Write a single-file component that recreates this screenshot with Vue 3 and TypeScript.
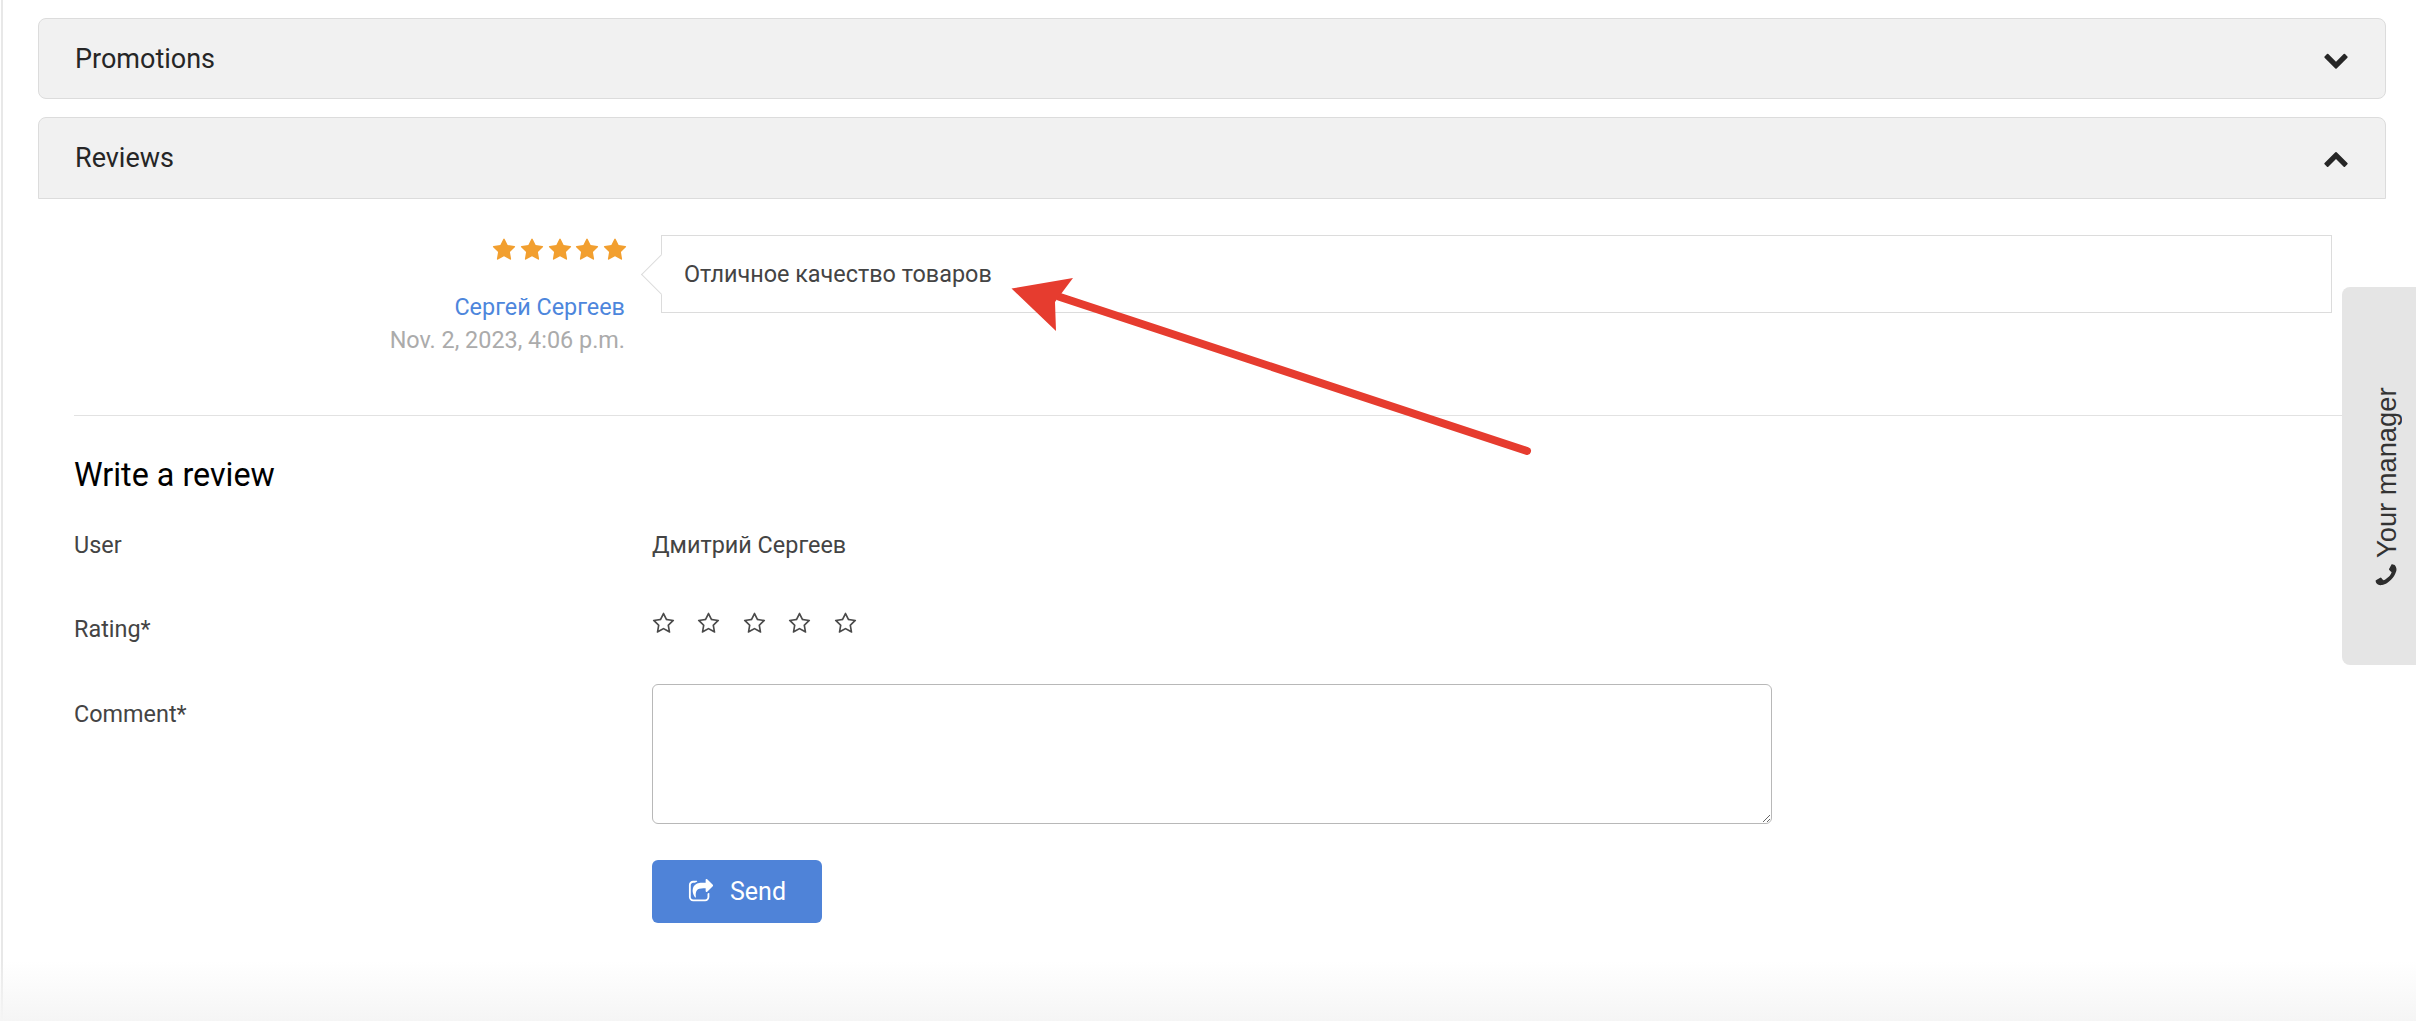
<script setup lang="ts">
const star = 'M1728 647q0 22-26 48l-363 354 86 500q1 7 1 20 0 21-10.500 35.500t-30.500 14.500q-19 0-40-12l-449-236-449 236q-22 12-40 12-21 0-31.500-14.500t-10.500-35.500q0-6 2-20l86-500-364-354q-25-27-25-48 0-37 56-46l502-73 225-455q19-41 49-41t49 41l225 455 502 73q56 9 56 46z'
const starO = 'M1201 1004l306-297-422-62-189-382-189 382-422 62 306 297-73 421 378-199 377 199zm527-357q0 22-26 48l-363 354 86 500q1 7 1 20 0 50-41 50-19 0-40-12l-449-236-449 236q-22 12-40 12-21 0-31.500-14.500t-10.500-35.500q0-6 2-20l86-500-364-354q-25-27-25-48 0-37 56-46l502-73 225-455q19-41 49-41t49 41l225 455 502 73q56 9 56 46z'
const stars = [1, 2, 3, 4, 5]
</script>

<template>
  <div class="page">
    <section class="panel closed">
      <span>Promotions</span>
      <svg class="chev" viewBox="0 0 1792 1792"><path d="M1683 808l-742 741q-19 19-45 19t-45-19l-742-741q-19-19-19-45.5t19-45.5l166-165q19-19 45-19t45 19l531 531 531-531q19-19 45-19t45 19l166 165q19 19 19 45.5t-19 45.5z" /></svg>
    </section>
    <section class="panel open">
      <span>Reviews</span>
      <svg class="chev" viewBox="0 0 1792 1792"><path d="M1683 1331l-166 165q-19 19-45 19t-45-19l-531-531-531 531q-19 19-45 19t-45-19l-166-165q-19-19-19-45.5t19-45.5l742-741q19-19 45-19t45 19l742 741q19 19 19 45.5t-19 45.5z" /></svg>
    </section>

    <div class="body">
      <div class="review">
        <div class="meta">
          <div class="gold">
            <svg v-for="s in stars" :key="s" viewBox="0 0 1792 1792"><path :d="star" /></svg>
          </div>
          <a class="author">Сергей Сергеев</a>
          <div class="date">Nov. 2, 2023, 4:06 p.m.</div>
        </div>
        <div class="bubble">Отличное качество товаров</div>
      </div>

      <hr class="rule" />

      <h3>Write a review</h3>
      <div class="row user">
        <label>User</label>
        <div>Дмитрий Сергеев</div>
      </div>
      <div class="row rating">
        <label>Rating*</label>
        <div class="empty">
          <svg v-for="s in stars" :key="s" viewBox="0 0 1792 1792"><path :d="starO" /></svg>
        </div>
      </div>
      <div class="row comment">
        <label>Comment*</label>
        <textarea></textarea>
      </div>
      <div class="row send">
        <span></span>
        <button type="button">
          <svg viewBox="0 0 1792 1792"><path d="M1472 989v259q0 119-84.500 203.500t-203.500 84.500h-832q-119 0-203.500-84.500t-84.500-203.500v-832q0-119 84.500-203.500t203.500-84.500h255q13 0 22.500 9.500t9.500 22.500q0 27-26 32-77 26-133 60-10 4-16 4h-112q-66 0-113 47t-47 113v832q0 66 47 113t113 47h832q66 0 113-47t47-113v-214q0-19 18-29 28-13 54-37 16-16 35-8 21 9 21 29zm237-496l-384 384q-18 19-45 19-12 0-25-5-39-17-39-59v-192h-160q-323 0-438 131-119 137-74 473 3 23-20 34-8 2-12 2-16 0-26-13-10-14-21-31t-39.500-68.500-49.500-99.500-38.500-114-17.500-122q0-49 3.500-91t14-90 28-88 47-81.500 68.500-74 94.500-61.500 124.500-48.500 159.500-30.500 196.500-11h160v-192q0-42 39-59 13-5 25-5 26 0 45 19l384 384q19 19 19 45t-19 45z" /></svg>
          Send
        </button>
      </div>
    </div>

    <aside class="manager">
      <span class="manager-label">
        <svg viewBox="0 0 1792 1792"><path d="M1600 1240q0 27-10 70.500t-21 68.500q-21 50-122 106-94 51-186 51-27 0-53-3.500t-57.500-12.500-47-14.500-55.500-20.500-49-18q-98-35-175-83-127-79-264-216t-216-264q-48-77-83-175-3-9-18-49t-20.500-55.500-14.500-47-12.500-57.500-3.500-53q0-92 51-186 56-101 106-122 25-11 68.500-21t70.500-10q14 0 21 3 18 6 53 76 11 19 30 54t35 63.500 31 53.500q3 4 17.500 25t21.500 35.500 7 28.500q0 20-28.500 50t-62 55-62 53-28.500 46q0 9 5 22.500t8.500 20.500 14 24 11.500 19q76 137 174 235t235 174q2 1 19 11.500t24 14 20.500 8.500 22.500 5q18 0 46-28.500t53-62 55-62 50-28.500q14 0 28.500 7t35.500 21.500 25 17.500q25 15 53.500 31t63.500 35 54 30q70 35 76 53 3 7 3 21z" /></svg>
        Your manager
      </span>
    </aside>

    <svg class="arrow" width="2416" height="1021" viewBox="0 0 2416 1021">
      <line x1="1527" y1="451" x2="1060" y2="297" stroke="#e63c2f" stroke-width="8" stroke-linecap="round" />
      <path d="M1011.500 288.500 L1073 278 L1055 302 L1056 331 Z" fill="#e63c2f" />
    </svg>
    <div class="fade"></div>
  </div>
</template>

<style scoped>
.page {
  position: relative;
  width: 2416px;
  height: 1021px;
  overflow: hidden;
  box-sizing: border-box;
  padding: 18px 30px 0 38px;
  background: #fff;
  font-family: Roboto, "Noto Sans", sans-serif;
  color: #444;
  font-size: 23.4px;
}
.page::before {
  content: "";
  position: absolute;
  left: 1px;
  top: 0;
  bottom: 0;
  width: 2px;
  background: #e8e8e8;
}
.panel {
  box-sizing: border-box;
  width: 2348px;
  display: flex;
  align-items: center;
  justify-content: space-between;
  padding: 0 36px 0 36px;
  background: #f1f1f1;
  border: 1px solid #dcdcdc;
  font-size: 27px;
  color: #262626;
}
.panel.closed {
  height: 81px;
  border-radius: 8px;
  margin-bottom: 18px;
}
.panel.open {
  height: 82px;
  border-radius: 8px 8px 0 0;
}
.chev {
  width: 26px;
  height: 26px;
  fill: #262626;
}
.body {
  padding: 0 0 0 36px;
}
.review {
  display: flex;
  padding-top: 36px;
}
.meta {
  width: 551px;
  text-align: right;
}
.gold {
  display: flex;
  justify-content: flex-end;
  gap: 3.7px;
  height: 24px;
  margin: 3px -2px 0 0;
}
.gold svg {
  width: 24px;
  height: 24px;
  fill: #f29f2f;
}
.author {
  display: block;
  margin-top: 30px;
  color: #4d86dc;
  line-height: 30px;
}
.date {
  color: #ababab;
  line-height: 30px;
  margin-top: 3px;
}
.bubble {
  position: relative;
  box-sizing: border-box;
  margin-left: 36px;
  width: 1671px;
  height: 78px;
  padding: 0 22px 1px;
  display: flex;
  align-items: center;
  border: 1px solid #dcdcdc;
  background: #fff;
}
.bubble::before {
  content: "";
  position: absolute;
  box-sizing: border-box;
  left: -15px;
  top: 24px;
  width: 29px;
  height: 29px;
  background: #fff;
  border-left: 1px solid #dcdcdc;
  border-bottom: 1px solid #dcdcdc;
  transform: rotate(45deg);
}
.rule {
  border: 0;
  border-top: 1px solid #e2e2e2;
  margin: 60px 0 0 0;
  width: 2300px;
}
h3 {
  margin: 41px 0 0;
  font-size: 32.300px;
  font-weight: 400;
  line-height: 36px;
  color: #000;
}
.row {
  display: grid;
  grid-template-columns: 578px 1fr;
  line-height: 30px;
}
.user {
  margin-top: 37px;
}
.rating {
  margin-top: 54px;
}
.comment {
  margin-top: 40px;
}
.comment label {
  padding-top: 15px;
}
.send {
  margin-top: 36px;
}
.empty {
  display: flex;
  gap: 22.400px;
  margin-top: -6px;
}
.empty svg {
  width: 23px;
  height: 23px;
  fill: #4a4a4a;
  margin-top: 4px;
}
textarea {
  display: block;
  box-sizing: border-box;
  width: 1120px;
  height: 140px;
  border: 1px solid #b8b8b8;
  border-radius: 6px;
  background: #fff;
  margin: 0;
  outline: none;
}
button {
  box-sizing: border-box;
  width: 170px;
  height: 63px;
  display: flex;
  align-items: center;
  justify-content: center;
  gap: 16px;
  border: 0;
  border-radius: 6px;
  background: #4f83d8;
  color: #fff;
  font: 400 25px Roboto, sans-serif;
}
button svg {
  width: 26px;
  height: 26px;
  fill: #fff;
}
.manager {
  position: absolute;
  left: 2342px;
  top: 287px;
  width: 74px;
  height: 378px;
  background: #e5e5e5;
  border-radius: 8px 0 0 8px;
}
.manager-label {
  position: absolute;
  left: 29px;
  top: 101px;
  height: 200px;
  display: flex;
  align-items: center;
  gap: 3px;
  writing-mode: vertical-rl;
  transform: rotate(180deg);
  font-family: "Liberation Sans", Arial, sans-serif;
  font-size: 27.300px;
  color: #333;
  white-space: nowrap;
}
.manager-label svg {
  width: 28px;
  height: 28px;
  fill: #2d2d2d;
  transform: rotate(90deg);
}
.arrow {
  position: absolute;
  left: 0;
  top: 0;
  pointer-events: none;
}
.fade {
  position: absolute;
  left: 0;
  right: 0;
  bottom: 0;
  height: 60px;
  background: linear-gradient(to bottom, rgba(245, 245, 245, 0), #f5f5f5);
  pointer-events: none;
}
</style>
